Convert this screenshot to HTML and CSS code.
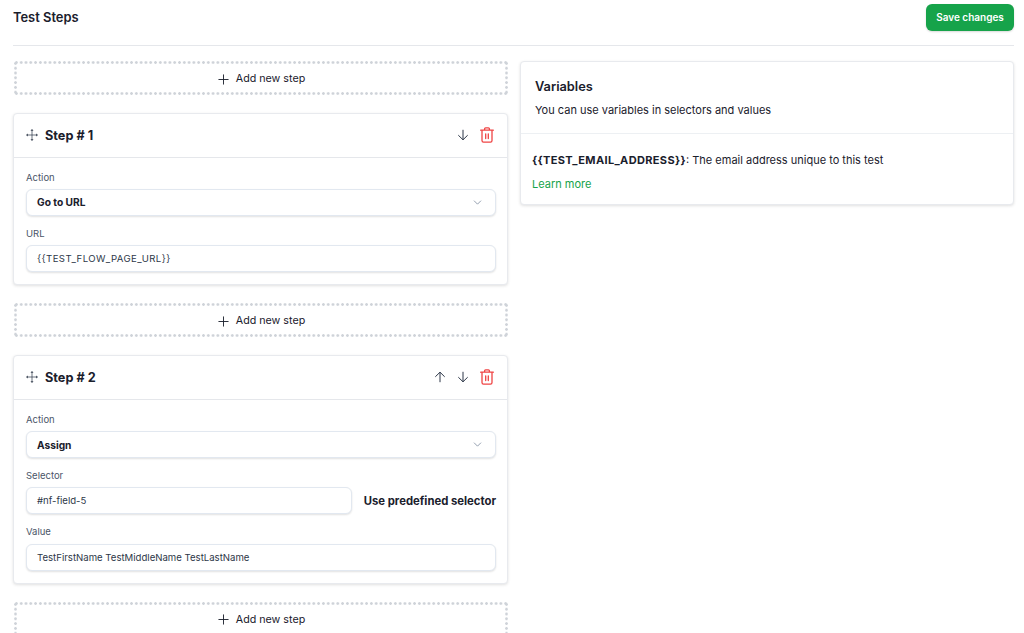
FILE: index.html
```html
<!DOCTYPE html>
<html lang="en">
<head>
<meta charset="utf-8">
<title>Test Steps</title>
<link rel="stylesheet" href="styles.css">
</head>
<body>
<svg class="defs" width="0" height="0" aria-hidden="true">
  <symbol id="i-plus" viewBox="0 0 12 12"><path d="M6 .5v11M.5 6h11" fill="none" stroke="currentColor" stroke-width="1"/></symbol>
  <symbol id="i-move" viewBox="0 0 12 12"><path d="M6 1.500v9M1.500 6h9" fill="none" stroke="currentColor" stroke-width=".7"/><path d="M6 0 7.500 1.800H4.500zM6 12 4.500 10.200h3zM0 6 1.800 4.500v3zM12 6 10.200 7.500v-3z" fill="currentColor"/></symbol>
  <symbol id="i-down" viewBox="0 0 12 12"><path d="M6 .8v10M1.300 6.200 6 10.800l4.700-4.600" fill="none" stroke="currentColor" stroke-width="1"/></symbol>
  <symbol id="i-up" viewBox="0 0 12 12"><path d="M6 11.200v-10M1.300 5.800 6 1.200l4.700 4.600" fill="none" stroke="currentColor" stroke-width="1"/></symbol>
  <symbol id="i-trash" viewBox="0 0 14 16"><path d="M.6 3.200h12.800M4.600 3V1.800c0-.6.400-1 1-1h2.800c.6 0 1 .4 1 1V3M2 3.200v10.400c0 .9.600 1.600 1.500 1.600h7c.9 0 1.500-.7 1.500-1.600V3.200M5.700 6.800v4.800M8.300 6.800v4.800" fill="none" stroke="currentColor" stroke-width="1.300" stroke-linecap="round" stroke-linejoin="round"/></symbol>
  <symbol id="i-chev" viewBox="0 0 10 6"><path d="M.8.800 5 5l4.200-4.200" fill="none" stroke="currentColor" stroke-width=".9"/></symbol>
</svg>
<main class="page">
  <header class="topbar">
    <h1 class="title">Test Steps</h1>
    <button class="save">Save changes</button>
  </header>
  <div class="columns">
    <section class="steps">
      <button class="add"><svg class="ico-plus"><use href="#i-plus"/></svg>Add new step</button>
      <article class="card">
        <div class="step-head">
          <svg class="ico-move"><use href="#i-move"/></svg>
          <h2 class="step-title">Step # 1</h2>
          <div class="step-tools">
            <svg class="ico-arrow"><use href="#i-down"/></svg>
            <svg class="ico-trash"><use href="#i-trash"/></svg>
          </div>
        </div>
        <div class="step-body">
          <div class="field">
            <label class="label">Action</label>
            <div class="control select"><span>Go to URL</span><svg class="ico-chev"><use href="#i-chev"/></svg></div>
          </div>
          <div class="field">
            <label class="label">URL</label>
            <div class="control"><span class="caps">{{TEST_FLOW_PAGE_URL}}</span></div>
          </div>
        </div>
      </article>
      <button class="add"><svg class="ico-plus"><use href="#i-plus"/></svg>Add new step</button>
      <article class="card">
        <div class="step-head">
          <svg class="ico-move"><use href="#i-move"/></svg>
          <h2 class="step-title">Step # 2</h2>
          <div class="step-tools">
            <svg class="ico-arrow"><use href="#i-up"/></svg>
            <svg class="ico-arrow"><use href="#i-down"/></svg>
            <svg class="ico-trash"><use href="#i-trash"/></svg>
          </div>
        </div>
        <div class="step-body">
          <div class="field">
            <label class="label">Action</label>
            <div class="control select"><span>Assign</span><svg class="ico-chev"><use href="#i-chev"/></svg></div>
          </div>
          <div class="field">
            <label class="label">Selector</label>
            <div class="inline">
              <div class="control grow">#nf-field-5</div>
              <span class="predef">Use predefined selector</span>
            </div>
          </div>
          <div class="field">
            <label class="label">Value</label>
            <div class="control">TestFirstName TestMiddleName TestLastName</div>
          </div>
        </div>
      </article>
      <button class="add"><svg class="ico-plus"><use href="#i-plus"/></svg>Add new step</button>
    </section>
    <aside class="card vars">
      <div class="vars-head">
        <h2 class="vars-title">Variables</h2>
        <p class="vars-sub">You can use variables in selectors and values</p>
      </div>
      <div class="vars-body">
        <p class="vars-line"><strong>{{TEST_EMAIL_ADDRESS}}</strong>: The email address unique to this test</p>
        <a class="learn" href="#">Learn more</a>
      </div>
    </aside>
  </div>
</main>
</body>
</html>
```
FILE: styles.css
```css
* { box-sizing: border-box; }
html, body { margin: 0; height: 633px; overflow: hidden; background: #fff; }
body { font-family: Inter, "Liberation Sans", sans-serif; color: #1a202c; }
.defs { position: absolute; }
.page { padding: 0 10px 0 13px; }
.topbar { display: flex; justify-content: space-between; align-items: flex-start; height: 46px; padding-top: 4px; border-bottom: 1px solid #e5e7eb; }
.title { margin: 5px 0 0; font-size: 12.9px; line-height: 17px; font-weight: 600; }
.save { width: 88px; height: 27px; border: 0; border-radius: 6px; background: #16a34a; color: #fff; font: 600 10px/27px Inter, sans-serif; padding: 0; box-shadow: 0 1px 2px rgba(0,0,0,.15); }
.columns { display: grid; grid-template-columns: 495px 494px; column-gap: 12px; padding-top: 15px; align-items: start; }
.steps { display: flex; flex-direction: column; gap: 17.8px; }
.add {
  display: flex; align-items: center; justify-content: center; gap: 7px;
  height: 34px; width: 494px; margin: 0 0 0 1px; padding: 2px 0 0 1px; border: 0;
  background:
    radial-gradient(circle at center, #cfd3d9 1.1px, transparent 1.6px) left top / 4.8px 3px repeat-x,
    radial-gradient(circle at center, #cfd3d9 1.1px, transparent 1.6px) left bottom / 4.8px 3px repeat-x,
    radial-gradient(circle at center, #cfd3d9 1.1px, transparent 1.6px) left top / 3px 4.8px repeat-y,
    radial-gradient(circle at center, #cfd3d9 1.1px, transparent 1.6px) right top / 3px 4.8px repeat-y,
    #fff;
  color: #1a202c; font: 400 10.7px/16px Inter, sans-serif;
}
.ico-plus { width: 11px; height: 11px; }
.card { background: #fff; border: 1px solid #e8eaee; border-radius: 4px; box-shadow: 0 1px 3px rgba(0,0,0,.12); }
.step-head { display: flex; align-items: center; height: 44px; padding: 0 13px 0 12px; border-bottom: 1px solid #e5e7eb; }
.ico-move { width: 12px; height: 12px; margin-right: 7px; color: #2d3748; }
.step-title { margin: 0; font-size: 12.7px; font-weight: 700; line-height: 17px; }
.step-tools { margin-left: auto; display: flex; align-items: center; gap: 11px; }
.ico-arrow { width: 12px; height: 12px; color: #2d3748; }
.ico-trash { width: 14px; height: 16px; color: #ef4444; }
.step-body { display: flex; flex-direction: column; gap: 10px; padding: 12px 11px 12.2px 12px; }
.field { display: flex; flex-direction: column; gap: 3.2px; }
.label { font-size: 9.5px; line-height: 16px; color: #4a5568; }
.control { display: flex; align-items: center; height: 27px; padding: 0 10px; border: 1px solid #e2e8f0; border-radius: 6px; background: #fff; box-shadow: 0 1px 2px rgba(0,0,0,.12); font-size: 9.6px; color: #2d3748; }
.caps { letter-spacing: .42px; }
.select { justify-content: space-between; font-weight: 700; font-size: 10.2px; color: #1a202c; }
.ico-chev { width: 9px; height: 5px; margin-right: 3px; color: #718096; }
.inline { display: flex; align-items: center; gap: 12px; }
.grow { flex: 1; }
.predef { font-size: 11.3px; font-weight: 700; }
.vars-head { height: 72px; padding: 16px 14px 0; border-bottom: 1px solid #edf0f3; }
.vars-title { margin: 0; font-size: 12.8px; line-height: 17px; font-weight: 600; }
.vars-sub { margin: 7px 0 0; font-size: 11px; line-height: 16px; }
.vars-body { padding: 18px 11px 12px; }
.vars-line { margin: 0; font-size: 11px; line-height: 16px; }
.vars-line strong { font-weight: 700; letter-spacing: .35px; }
.learn { display: block; margin-top: 8px; font-size: 11px; line-height: 16px; color: #16a34a; text-decoration: none; }
```
